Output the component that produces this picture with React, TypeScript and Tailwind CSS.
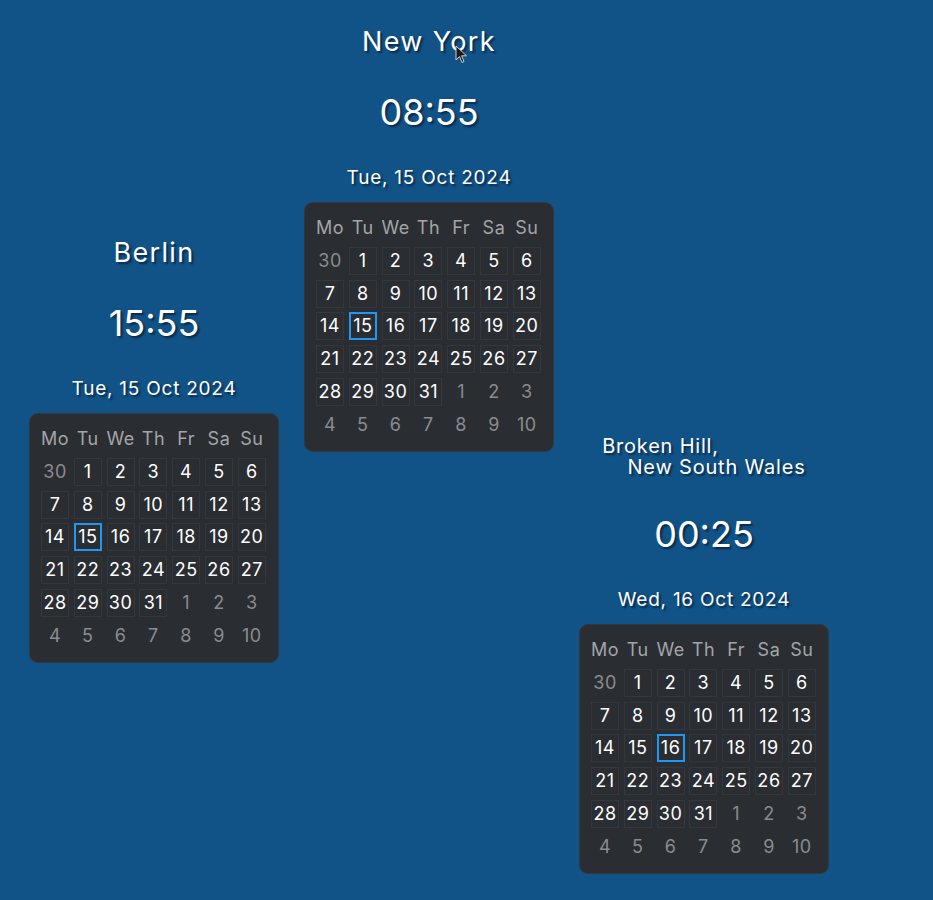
import React from "react";

const FONT = { fontFamily: "Inter, 'Noto Sans', sans-serif" };

type Cell = { d: number; cur: boolean };

function buildDays(): Cell[] {
  const cells: Cell[] = [{ d: 30, cur: false }];
  for (let i = 1; i <= 31; i++) cells.push({ d: i, cur: true });
  for (let i = 1; i <= 10; i++) cells.push({ d: i, cur: false });
  return cells;
}

const HEAD = ["Mo", "Tu", "We", "Th", "Fr", "Sa", "Su"];

function Calendar({ selected }: { selected: number }) {
  const days = buildDays();
  return (
    <div className="w-[250px] h-[250px] rounded-[9px] bg-[#2a2d32] border border-[#34373c] px-[11px] pt-[11px] pb-[11px]">
      <div className="grid grid-cols-[repeat(7,28px)] auto-rows-[28px] gap-[4.8px] text-[18px] leading-none tracking-[0.03em]">
        {HEAD.map((h) => (
          <div key={h} className="flex items-center justify-center text-[#a3a5a8] whitespace-nowrap">
            {h}
          </div>
        ))}
        {days.map((c, i) => {
          const sel = c.cur && c.d === selected;
          return (
            <div
              key={i}
              className={
                "flex items-center justify-center " +
                (c.cur
                  ? sel
                    ? "border-2 border-[#2196f3] text-white"
                    : "border border-[#34383d] text-white"
                  : "text-[#8a8c8f]")
              }
            >
              {c.d}
            </div>
          );
        })}
      </div>
    </div>
  );
}

function Widget({
  left,
  top,
  title,
  time,
  date,
  selected,
}: {
  left: number;
  top: number;
  title: React.ReactNode;
  time: string;
  date: string;
  selected: number;
}) {
  return (
    <div
      className="absolute flex flex-col items-center w-[250px] text-white [text-shadow:2px_2px_2px_rgba(0,10,30,0.55)]"
      style={{ left, top }}
    >
      <div className="h-[38px] w-full flex flex-col items-center justify-center">{title}</div>
      <div className="mt-[29px] h-[44px] leading-[44px] text-[36px]">{time}</div>
      <div className="mt-[32px] h-[24px] leading-[24px] text-[19px] tracking-[0.04em] whitespace-nowrap">{date}</div>
      <div className="mt-[12px] [text-shadow:none]">
        <Calendar selected={selected} />
      </div>
    </div>
  );
}

export default function App() {
  return (
    <div className="relative w-[933px] h-[900px] bg-[#115387] overflow-hidden" style={FONT}>
      <Widget
        left={304}
        top={23}
        title={<div className="text-[27px] leading-[38px] tracking-[0.05em] whitespace-nowrap">New York</div>}
        time="08:55"
        date="Tue, 15 Oct 2024"
        selected={15}
      />
      <Widget
        left={29}
        top={234}
        title={<div className="text-[27px] leading-[38px] tracking-[0.05em]">Berlin</div>}
        time="15:55"
        date="Tue, 15 Oct 2024"
        selected={15}
      />
      <Widget
        left={579}
        top={445}
        title={
          <div className="w-full text-[20px] leading-[21px] tracking-[0.04em] -mt-[14px] text-center">
            <div className="pr-[87px] whitespace-nowrap">Broken Hill,</div>
            <div className="pl-[25px] whitespace-nowrap">New South Wales</div>
          </div>
        }
        time="00:25"
        date="Wed, 16 Oct 2024"
        selected={16}
      />
      <svg className="absolute left-[455px] top-[45px]" width="13" height="19" viewBox="0 0 13 19">
        <path d="M1 1 L1 15 L4.5 11.5 L7 17.5 L9 16.6 L6.6 10.8 L11.5 10.8 Z" fill="#1a1a1a" stroke="#cfcfcf" strokeWidth="1" />
      </svg>
    </div>
  );
}
